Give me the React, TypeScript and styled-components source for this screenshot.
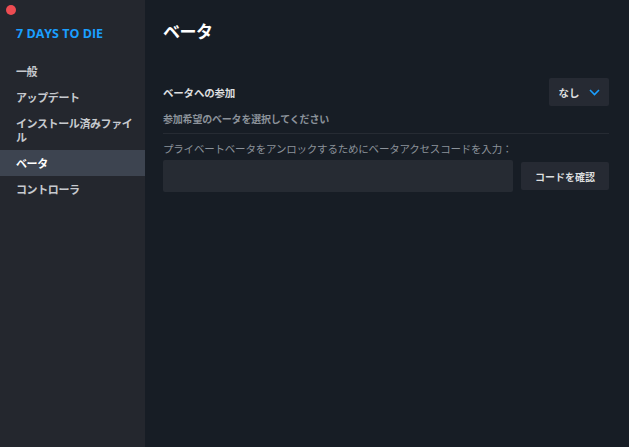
import React from "react";
import styled, { createGlobalStyle } from "styled-components";

const GlobalStyle = createGlobalStyle`
  html, body {
    margin: 0;
    padding: 0;
    height: 100%;
    background: #171d25;
  }
  #root {
    height: 100%;
  }
  * {
    box-sizing: border-box;
  }
`;

const Window = styled.div`
  display: flex;
  width: 629px;
  height: 447px;
  font-family: "Noto Sans CJK JP", "Noto Sans", sans-serif;
  overflow: hidden;
`;

const Sidebar = styled.nav`
  width: 145px;
  flex-shrink: 0;
  background: #24272e;
  display: flex;
  flex-direction: column;
  padding-top: 5px;
`;

const Close = styled.div`
  width: 10px;
  height: 10px;
  border-radius: 50%;
  background: #ed4c52;
  margin-left: 6px;
`;

const GameTitle = styled.div`
  color: #1a9fff;
  font-family: "Open Sans", "Noto Sans", sans-serif;
  font-weight: 700;
  font-size: 12.5px;
  line-height: 18px;
  padding: 10px 16px 0;
  height: 43px;
`;

const MenuItem = styled.div<{ $active?: boolean }>`
  padding: 6px 10px 6px 16px;
  min-height: 26px;
  font-size: 11px;
  letter-spacing: -0.4px;
  font-weight: 700;
  line-height: 14px;
  display: flex;
  align-items: center;
  color: ${(p) => (p.$active ? "#ffffff" : "#c7cacf")};
  background: ${(p) => (p.$active ? "#3d4450" : "transparent")};
`;

const Main = styled.main`
  flex: 1;
  background: #171d25;
  padding: 18px 20px 0 18px;
`;

const Heading = styled.h1`
  margin: 0;
  color: #ffffff;
  font-size: 17px;
  letter-spacing: -0.5px;
  font-weight: 700;
  line-height: 26px;
  height: 60px;
`;

const Row = styled.div`
  display: flex;
  align-items: center;
  justify-content: space-between;
`;

const Label = styled.div`
  color: #dcdedf;
  font-size: 10.5px;
  font-weight: 700;
  letter-spacing: -0.2px;
`;

const Dropdown = styled.div`
  width: 60px;
  height: 28px;
  background: #262a33;
  border-radius: 2px;
  display: flex;
  align-items: center;
  justify-content: center;
  gap: 9px;
  color: #dcdedf;
  font-size: 10.5px;
  font-weight: 700;
`;

const Hint = styled.div`
  color: #8b929a;
  font-size: 10px;
  font-weight: 700;
  letter-spacing: -0.2px;
  margin-top: 5px;
  padding-bottom: 7px;
  border-bottom: 1px solid #262b33;
`;

const CodeHint = styled.div`
  color: #8b929a;
  font-size: 10.5px;
  letter-spacing: -0.2px;
  margin-top: 7px;
  line-height: 16px;
`;

const CodeRow = styled.div`
  display: flex;
  align-items: center;
  gap: 8px;
  margin-top: 3px;
`;

const CodeInput = styled.div`
  flex: 1;
  height: 32px;
  background: #262b33;
  border-radius: 2px;
`;

const ConfirmButton = styled.div`
  width: 88px;
  height: 28px;
  background: #262a33;
  border-radius: 2px;
  display: flex;
  align-items: center;
  justify-content: center;
  color: #dcdedf;
  font-size: 10px;
  font-weight: 700;
`;

const Chevron = () => (
  <svg width="11" height="7" viewBox="0 0 11 7" fill="none">
    <path d="M1 1l4.5 4.5L10 1" stroke="#1a9fff" strokeWidth="1.6" />
  </svg>
);

export default function App() {
  return (
    <>
      <GlobalStyle />
      <Window>
        <Sidebar>
          <Close />
          <GameTitle>7 DAYS TO DIE</GameTitle>
          <MenuItem>一般</MenuItem>
          <MenuItem>アップデート</MenuItem>
          <MenuItem>インストール済みファイル</MenuItem>
          <MenuItem $active>ベータ</MenuItem>
          <MenuItem>コントローラ</MenuItem>
        </Sidebar>
        <Main>
          <Heading>ベータ</Heading>
          <Row>
            <Label>ベータへの参加</Label>
            <Dropdown>
              なし
              <Chevron />
            </Dropdown>
          </Row>
          <Hint>参加希望のベータを選択してください</Hint>
          <CodeHint>
            プライベートベータをアンロックするためにベータアクセスコードを入力：
          </CodeHint>
          <CodeRow>
            <CodeInput />
            <ConfirmButton>コードを確認</ConfirmButton>
          </CodeRow>
        </Main>
      </Window>
    </>
  );
}
